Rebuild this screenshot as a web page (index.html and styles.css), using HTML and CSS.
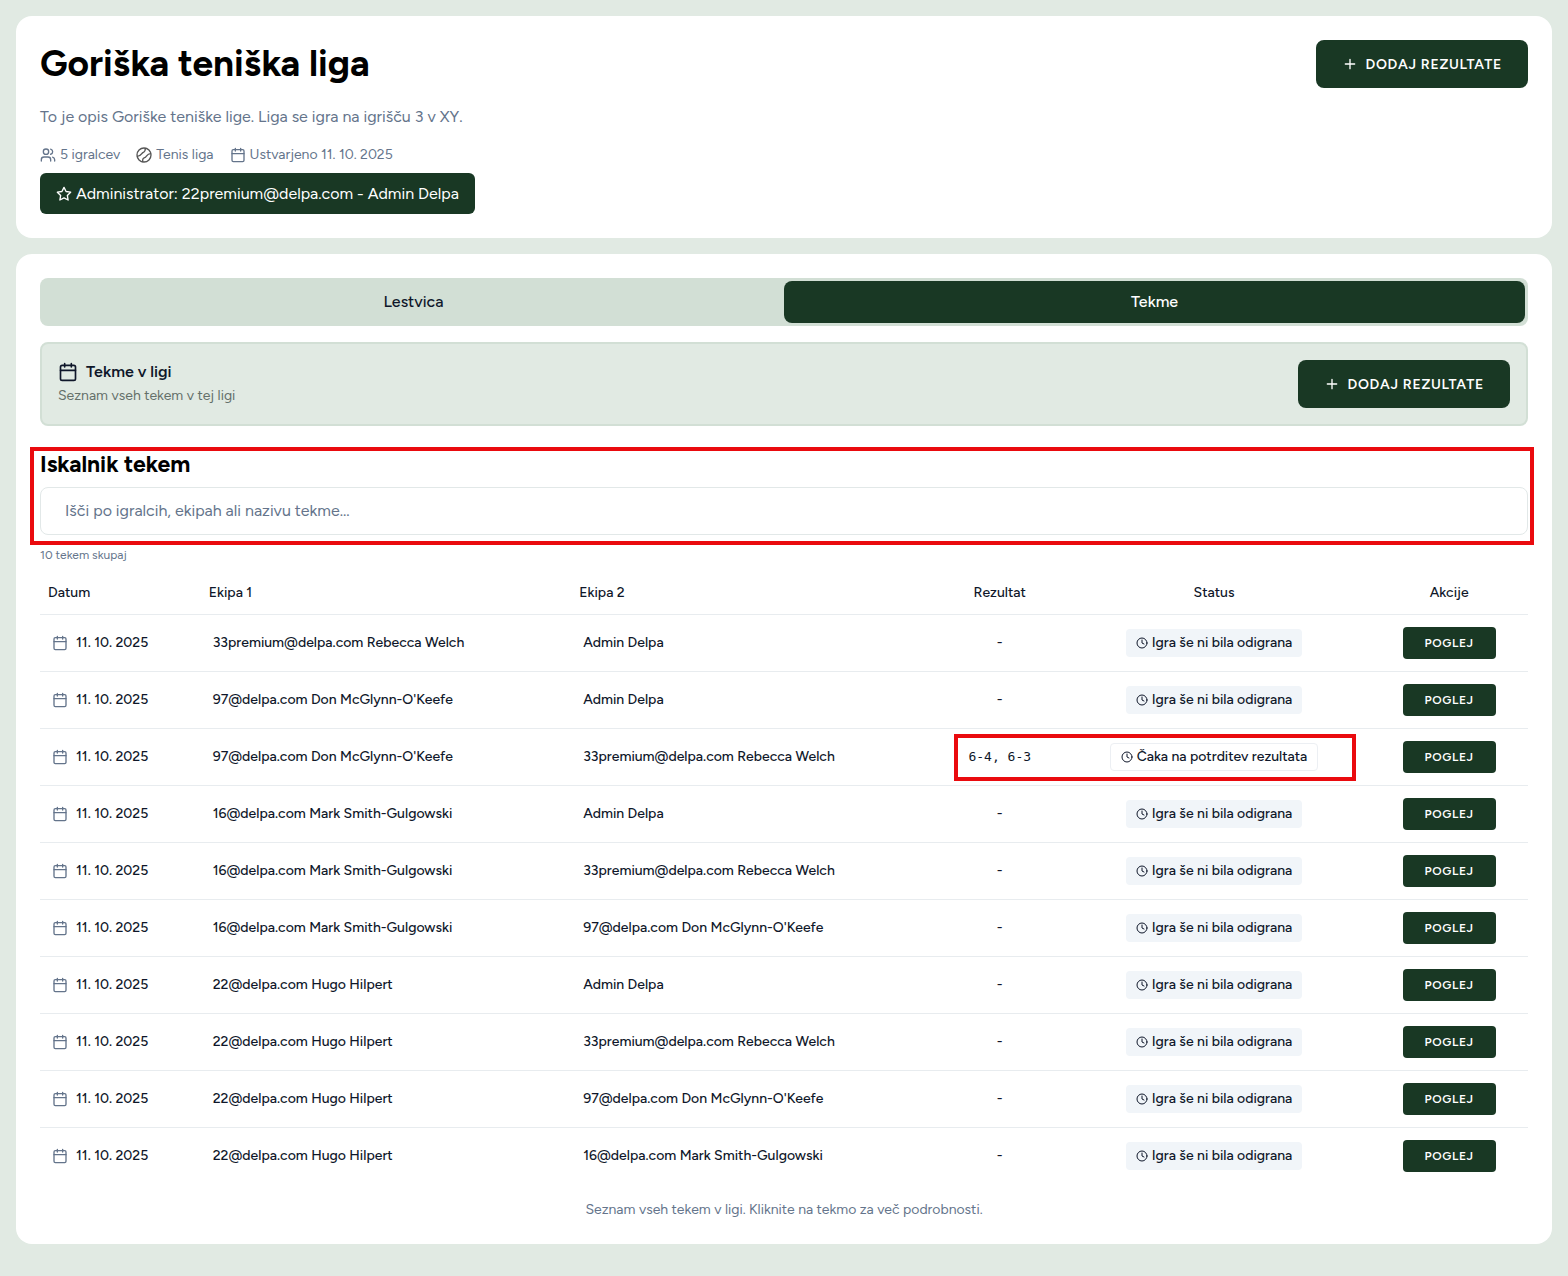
FILE: index.html
```
<!DOCTYPE html>
<html lang="sl">
<head>
  <meta charset="UTF-8">
  <meta name="viewport" content="width=device-width, initial-scale=1.0">
  <title>Goriška teniška liga</title>
  <link rel="stylesheet" href="styles.css">
</head>
<body>

  <!-- Icons -->
  <svg class="icon-defs" aria-hidden="true">
    <symbol id="calendar" viewBox="0 0 24 24"><path d="M8 2v4M16 2v4M3 10h18"/><rect x="3" y="4" width="18" height="18" rx="2"/></symbol>
    <symbol id="clock" viewBox="0 0 24 24"><circle cx="12" cy="12" r="10"/><path d="M12 6v6l4 2"/></symbol>
    <symbol id="plus" viewBox="0 0 24 24"><path d="M5 12h14M12 5v14"/></symbol>
    <symbol id="users" viewBox="0 0 24 24"><path d="M16 21v-2a4 4 0 0 0-4-4H6a4 4 0 0 0-4 4v2"/><circle cx="9" cy="7" r="4"/><path d="M22 21v-2a4 4 0 0 0-3-3.87M16 3.13a4 4 0 0 1 0 7.75"/></symbol>
    <symbol id="ball" viewBox="0 0 24 24"><circle cx="12" cy="12" r="10.500"/><path d="M2 14C8 14 8 9 11 8S14 5 14 2M10 22C10 18 10 17 13 16S16 10 22 10"/></symbol>
    <symbol id="star" viewBox="0 0 24 24"><path d="M12 2l3.090 6.260L22 9.270l-5 4.870 1.180 6.880L12 17.770l-6.180 3.250L7 14.140 2 9.270l6.910-1.010z"/></symbol>
  </svg>

  <header class="card league">
    <div class="league-info">
      <h1>Goriška teniška liga</h1>
      <p class="description">To je opis Goriške teniške lige. Liga se igra na igrišču 3 v XY.</p>
      <div class="meta">
        <span><svg class="icon"><use href="#users"/></svg>5 igralcev</span>
        <span><svg class="icon ball"><use href="#ball"/></svg>Tenis liga</span>
        <span><svg class="icon"><use href="#calendar"/></svg>Ustvarjeno 11. 10. 2025</span>
      </div>
      <div class="admin"><svg class="icon"><use href="#star"/></svg>Administrator: 22premium@delpa.com - Admin Delpa</div>
    </div>
    <button class="btn" type="button"><svg class="icon"><use href="#plus"/></svg>DODAJ REZULTATE</button>
  </header>

  <main class="card">
    <div class="tabs" role="tablist">
      <button class="tab" type="button" role="tab" aria-selected="false">Lestvica</button>
      <button class="tab active" type="button" role="tab" aria-selected="true">Tekme</button>
    </div>

    <section class="panel">
      <div>
        <h2><svg class="icon"><use href="#calendar"/></svg>Tekme v ligi</h2>
        <p>Seznam vseh tekem v tej ligi</p>
      </div>
      <button class="btn" type="button"><svg class="icon"><use href="#plus"/></svg>DODAJ REZULTATE</button>
    </section>

    <!-- Search -->
    <div class="search">
      <label for="search">Iskalnik tekem</label>
      <input id="search" type="text" placeholder="Išči po igralcih, ekipah ali nazivu tekme...">
    </div>
    <p class="count">10 tekem skupaj</p>

    <!-- Matches -->
    <table class="matches">
      <colgroup>
        <col class="col-date"><col class="col-team"><col class="col-team"><col class="col-score"><col class="col-status"><col>
      </colgroup>
      <thead>
        <tr>
          <th>Datum</th>
          <th>Ekipa 1</th>
          <th>Ekipa 2</th>
          <th class="center">Rezultat</th>
          <th class="center">Status</th>
          <th class="center">Akcije</th>
        </tr>
      </thead>
      <tbody>
        <tr>
          <td><div class="date"><svg class="icon"><use href="#calendar"/></svg>11. 10. 2025</div></td>
          <td>33premium@delpa.com Rebecca Welch</td>
          <td>Admin Delpa</td>
          <td class="center">-</td>
          <td class="center"><span class="badge"><svg class="icon"><use href="#clock"/></svg>Igra še ni bila odigrana</span></td>
          <td class="center"><button class="btn small" type="button">POGLEJ</button></td>
        </tr>
        <tr>
          <td><div class="date"><svg class="icon"><use href="#calendar"/></svg>11. 10. 2025</div></td>
          <td>97@delpa.com Don McGlynn-O'Keefe</td>
          <td>Admin Delpa</td>
          <td class="center">-</td>
          <td class="center"><span class="badge"><svg class="icon"><use href="#clock"/></svg>Igra še ni bila odigrana</span></td>
          <td class="center"><button class="btn small" type="button">POGLEJ</button></td>
        </tr>
        <tr class="pending">
          <td><div class="date"><svg class="icon"><use href="#calendar"/></svg>11. 10. 2025</div></td>
          <td>97@delpa.com Don McGlynn-O'Keefe</td>
          <td>33premium@delpa.com Rebecca Welch</td>
          <td class="center score">6-4, 6-3</td>
          <td class="center"><span class="badge outline"><svg class="icon"><use href="#clock"/></svg>Čaka na potrditev rezultata</span></td>
          <td class="center"><button class="btn small" type="button">POGLEJ</button></td>
        </tr>
        <tr>
          <td><div class="date"><svg class="icon"><use href="#calendar"/></svg>11. 10. 2025</div></td>
          <td>16@delpa.com Mark Smith-Gulgowski</td>
          <td>Admin Delpa</td>
          <td class="center">-</td>
          <td class="center"><span class="badge"><svg class="icon"><use href="#clock"/></svg>Igra še ni bila odigrana</span></td>
          <td class="center"><button class="btn small" type="button">POGLEJ</button></td>
        </tr>
        <tr>
          <td><div class="date"><svg class="icon"><use href="#calendar"/></svg>11. 10. 2025</div></td>
          <td>16@delpa.com Mark Smith-Gulgowski</td>
          <td>33premium@delpa.com Rebecca Welch</td>
          <td class="center">-</td>
          <td class="center"><span class="badge"><svg class="icon"><use href="#clock"/></svg>Igra še ni bila odigrana</span></td>
          <td class="center"><button class="btn small" type="button">POGLEJ</button></td>
        </tr>
        <tr>
          <td><div class="date"><svg class="icon"><use href="#calendar"/></svg>11. 10. 2025</div></td>
          <td>16@delpa.com Mark Smith-Gulgowski</td>
          <td>97@delpa.com Don McGlynn-O'Keefe</td>
          <td class="center">-</td>
          <td class="center"><span class="badge"><svg class="icon"><use href="#clock"/></svg>Igra še ni bila odigrana</span></td>
          <td class="center"><button class="btn small" type="button">POGLEJ</button></td>
        </tr>
        <tr>
          <td><div class="date"><svg class="icon"><use href="#calendar"/></svg>11. 10. 2025</div></td>
          <td>22@delpa.com Hugo Hilpert</td>
          <td>Admin Delpa</td>
          <td class="center">-</td>
          <td class="center"><span class="badge"><svg class="icon"><use href="#clock"/></svg>Igra še ni bila odigrana</span></td>
          <td class="center"><button class="btn small" type="button">POGLEJ</button></td>
        </tr>
        <tr>
          <td><div class="date"><svg class="icon"><use href="#calendar"/></svg>11. 10. 2025</div></td>
          <td>22@delpa.com Hugo Hilpert</td>
          <td>33premium@delpa.com Rebecca Welch</td>
          <td class="center">-</td>
          <td class="center"><span class="badge"><svg class="icon"><use href="#clock"/></svg>Igra še ni bila odigrana</span></td>
          <td class="center"><button class="btn small" type="button">POGLEJ</button></td>
        </tr>
        <tr>
          <td><div class="date"><svg class="icon"><use href="#calendar"/></svg>11. 10. 2025</div></td>
          <td>22@delpa.com Hugo Hilpert</td>
          <td>97@delpa.com Don McGlynn-O'Keefe</td>
          <td class="center">-</td>
          <td class="center"><span class="badge"><svg class="icon"><use href="#clock"/></svg>Igra še ni bila odigrana</span></td>
          <td class="center"><button class="btn small" type="button">POGLEJ</button></td>
        </tr>
        <tr>
          <td><div class="date"><svg class="icon"><use href="#calendar"/></svg>11. 10. 2025</div></td>
          <td>22@delpa.com Hugo Hilpert</td>
          <td>16@delpa.com Mark Smith-Gulgowski</td>
          <td class="center">-</td>
          <td class="center"><span class="badge"><svg class="icon"><use href="#clock"/></svg>Igra še ni bila odigrana</span></td>
          <td class="center"><button class="btn small" type="button">POGLEJ</button></td>
        </tr>
      </tbody>
    </table>
    <p class="note">Seznam vseh tekem v ligi. Kliknite na tekmo za več podrobnosti.</p>
  </main>

</body>
</html>
```
FILE: styles.css
```
* {
  box-sizing: border-box;
}
body {
  margin: 0;
  padding: 16px;
  background: #e1eae3;
  color: #0f172a;
  font-family: Figtree, Lato, sans-serif;
  font-size: 14px;
  line-height: 20px;
}
h1, h2, p {
  margin: 0;
}
button, input {
  font-family: inherit;
}
.icon-defs {
  display: none;
}
.icon {
  width: 16px;
  height: 16px;
  flex: none;
  fill: none;
  stroke: currentColor;
  stroke-width: 2;
  stroke-linecap: round;
  stroke-linejoin: round;
}
.card {
  background: #fff;
  border-radius: 16px;
  padding: 24px;
}
.league {
  display: flex;
  justify-content: space-between;
  align-items: flex-start;
  margin-bottom: 16px;
}
.league h1 {
  color: #000;
  font-size: 37px;
  font-weight: 700;
  line-height: 46px;
  margin-bottom: 19px;
}
.description {
  color: #64748b;
  font-size: 16px;
  line-height: 24px;
  margin-bottom: 16px;
}
.meta {
  display: flex;
  gap: 16px;
  color: #64748b;
  margin-bottom: 8px;
}
.meta span {
  display: flex;
  align-items: center;
  gap: 4px;
}
.meta .ball {
  color: #555;
}
.admin {
  display: inline-flex;
  align-items: center;
  gap: 4px;
  height: 41px;
  padding: 0 16px;
  border-radius: 6px;
  background: #193824;
  color: #fff;
  font-size: 16px;
}
.btn {
  display: inline-flex;
  align-items: center;
  justify-content: center;
  gap: 8px;
  height: 48px;
  padding: 0 26px;
  border: 0;
  border-radius: 8px;
  background: #193824;
  color: #fff;
  font-size: 14px;
  font-weight: 600;
  letter-spacing: 0.05em;
  cursor: pointer;
}
.btn.small {
  height: 32px;
  padding: 0 22px;
  border-radius: 4px;
  font-size: 12px;
}
.tabs {
  display: grid;
  grid-template-columns: 1fr 1fr;
  padding: 3px;
  border-radius: 8px;
  background: #d2dfd5;
  margin-bottom: 16px;
}
.tab {
  height: 42px;
  padding: 0 0 2px;
  border: 0;
  border-radius: 8px;
  background: none;
  color: #0f172a;
  font-size: 16px;
  font-weight: 500;
  cursor: pointer;
}
.tab.active {
  background: #193824;
  color: #fff;
}
.panel {
  display: flex;
  justify-content: space-between;
  padding: 16px;
  border: 2px solid #d2dfd5;
  border-radius: 8px;
  background: #e1eae3;
  margin-bottom: 24px;
}
.panel h2 {
  display: flex;
  align-items: center;
  gap: 8px;
  font-size: 16px;
  font-weight: 600;
  line-height: 24px;
}
.panel h2 .icon {
  width: 20px;
  height: 20px;
}
.panel p {
  color: #64706a;
  line-height: 24px;
}
.search {
  position: relative;
}
.search label {
  display: block;
  color: #000;
  font-size: 23px;
  font-weight: 700;
  line-height: 28px;
  margin-bottom: 9px;
}
.search input {
  display: block;
  width: 100%;
  height: 48px;
  padding: 0 24px 2px;
  border: 1px solid #e2e8e8;
  border-radius: 8px;
  font-size: 16px;
}
.search input::placeholder {
  color: #64748b;
}
/* Highlight frames */
.search::after, .pending .score::after {
  content: "";
  position: absolute;
  border: 4px solid #ea0a0e;
  pointer-events: none;
}
.search::after {
  inset: -3px -6px -10px -10px;
}
.count {
  color: #64748b;
  font-size: 12px;
  margin: 10px 0 8px;
}
.matches {
  width: 100%;
  table-layout: fixed;
  border-collapse: collapse;
}
.col-date {
  width: 10.8%;
}
.col-team {
  width: 24.9%;
}
.col-score {
  width: 7.8%;
}
.col-status {
  width: 21%;
}
.matches th {
  height: 41px;
  padding: 0 8px;
  font-weight: 500;
  text-align: left;
}
.matches td {
  height: 57px;
  padding: 0 12px;
  font-weight: 500;
}
.matches tbody tr {
  border-top: 1px solid #e8ecef;
}
.matches .center {
  text-align: center;
}
.date {
  display: flex;
  align-items: center;
  gap: 8px;
}
.date .icon {
  color: #64748b;
}
.matches .score {
  padding: 0;
  font-family: "DejaVu Sans Mono", monospace;
  font-size: 13px;
  font-weight: 400;
}
.pending {
  position: relative;
}
.pending .score::after {
  top: 5px;
  bottom: 4px;
  left: 61.4%;
  width: 26.5%;
}
.badge {
  display: inline-flex;
  align-items: center;
  gap: 4px;
  height: 28px;
  padding: 0 10px;
  border-radius: 4px;
  background: #f1f5f9;
}
.badge.outline {
  border: 1px solid #eceff3;
  background: #fff;
}
.badge .icon {
  width: 12px;
  height: 12px;
}
.note {
  color: #64748b;
  margin-top: 16px;
  text-align: center;
}
```
